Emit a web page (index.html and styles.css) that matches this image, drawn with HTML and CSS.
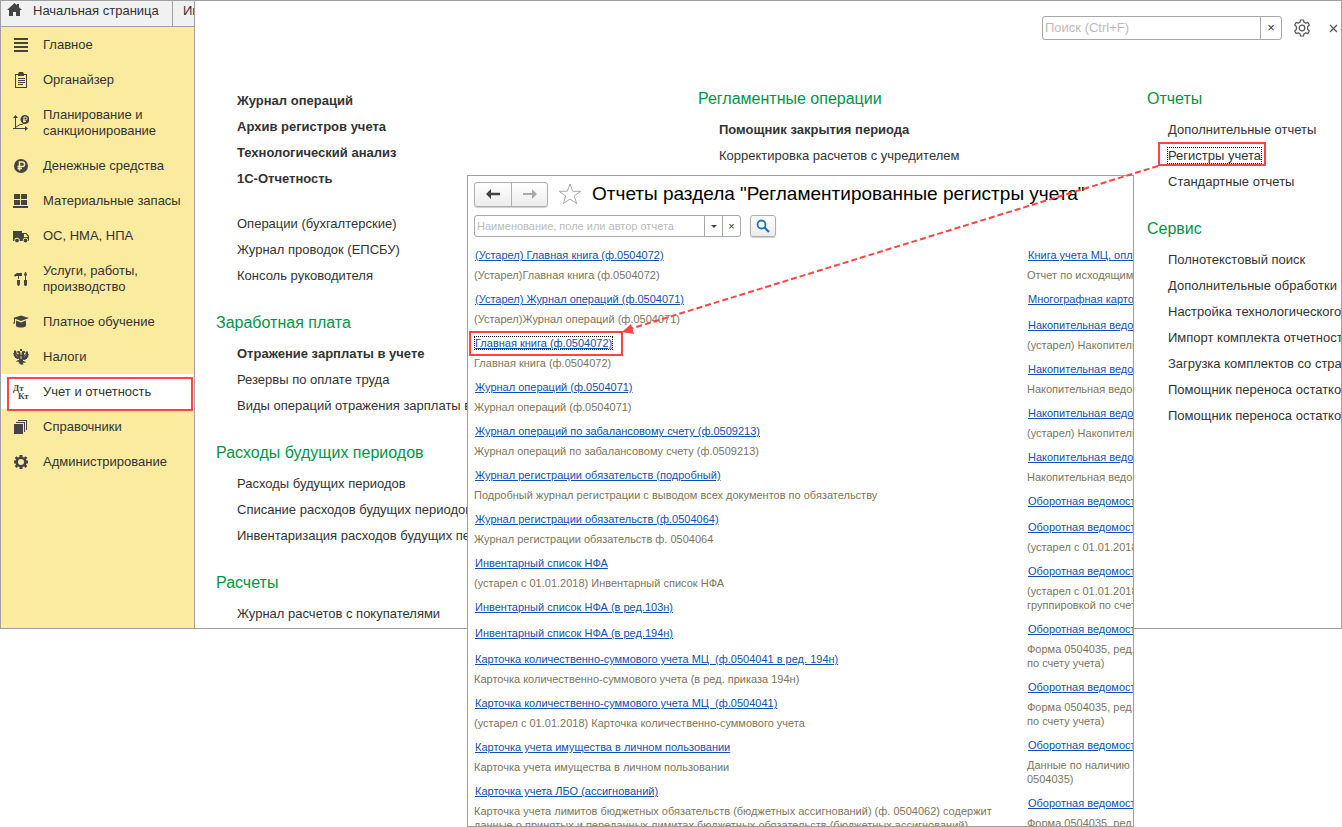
FILE: index.html
```html
<!DOCTYPE html>
<html lang="ru">
<head>
<meta charset="utf-8">
<title>Учет и отчетность</title>
<link rel="stylesheet" href="styles.css">
</head>
<body>
<div class="desktop">
  <div class="app">
    <aside class="sidebar">
      <div class="tabs">
        <a class="tab tab-home" href="#">
          <svg width="15" height="14" viewBox="0 0 15 14"><path d="M7.500 0 0 7h2v6h4V9h3v4h4V7h2L12 4.200V1h-2v1.300z" fill="#444"/></svg>
          <span>Начальная страница</span>
        </a>
        <a class="tab" href="#">Информация</a>
      </div>
      <nav class="sections">
        <a class="section" href="#">
          <svg class="ico" viewBox="0 0 16 16"><path d="M1 1h14v2H1zM1 5h14v2H1zM1 9h14v2H1zM1 13h14v2H1z"/></svg>
          <span>Главное</span>
        </a>
        <a class="section" href="#">
          <svg class="ico" viewBox="0 0 16 16"><path fill-rule="evenodd" d="M2 2h3l1-2h4l1 2h3v14H2zM3 3v12h10V3h-2v1H5V3z"/><path d="M5 6h7v1H5zM5 8h7v1H5zM5 10h7v1H5zM5 12h5v1H5z"/></svg>
          <span>Органайзер</span>
        </a>
        <a class="section" href="#">
          <svg class="ico" viewBox="0 0 16 16"><path d="M2 2h1v11h9v-2l3 2.500-3 2.500v-2H0v-1h2zM2.500 0 5 3H0z"/><path d="M3 12 7 9.500h2l3-2" fill="none" stroke="#444"/><circle cx="12" cy="4.500" r="4.500"/><path d="M11 7.500V2h1.500a1.500 1.500 0 0 1 0 3H10M10 6.500h3" class="cut"/></svg>
          <span>Планирование и<br>санкционирование</span>
        </a>
        <a class="section" href="#">
          <svg class="ico" viewBox="0 0 16 16"><circle cx="8" cy="8" r="7"/><path d="M6.500 12.500V4h2.800a2.200 2.200 0 0 1 0 4.500H4.500M4.500 10.500H9" class="cut wide"/></svg>
          <span>Денежные средства</span>
        </a>
        <a class="section" href="#">
          <svg class="ico" viewBox="0 0 16 16"><path d="M1 1h6v5H1zM8 1h6v5H8zM1 7h6v5H1zM8 7h6v5H8zM0 13h15v2H0z"/></svg>
          <span>Материальные запасы</span>
        </a>
        <a class="section" href="#">
          <svg class="ico" viewBox="0 0 16 16"><path fill-rule="evenodd" d="M0 3h9v10H0zM9 5h4.500L16 8v5H9zM11 6v3h4l-2-3z"/><circle cx="4" cy="12.500" r="2.400" stroke="#fbeb9e"/><circle cx="12.500" cy="12.500" r="2.400" stroke="#fbeb9e"/></svg>
          <span>ОС, НМА, НПА</span>
        </a>
        <a class="section" href="#">
          <svg class="ico" viewBox="0 0 16 16"><path d="M1 4 4 2h5v3H6v3H5V5H3L2 6zM4 9h3v4l-1 2H5l-1-2zM12 1h1l1 3-1 1v4h1v5l-1 1h-1l-1-1V9h1V5l-1-1z"/></svg>
          <span>Услуги, работы,<br>производство</span>
        </a>
        <a class="section" href="#">
          <svg class="ico" viewBox="0 0 16 16"><path d="M8 1.500 16 4 8 7 2 4.800V9L1 10 0 9l1-1V4.500L0 4zM3 6.500l5 2 5-2V12c-2 2-8 2-10 0z"/></svg>
          <span>Платное обучение</span>
        </a>
        <a class="section" href="#">
          <svg class="ico" viewBox="0 0 16 16"><path d="M7 0h2v2H7zM4.500 2h2L7.500 4v2h1V4l1-2h2l1 1.500-1.500.500v2H11l1.500-1 .500-3 1 1 1-1v3l1 .500-1 1.500.500 1-1.500 1v1h-1.500v1H11l-1-.500v1.500l2 .500 1 1.500-2-.500-1 .500.500 1.500H9L8 16l-1-1.500H5.500L6 13l-1-.500-2 .500 1-1.500 2-.500V9.500L5 10H3.500V9H2V8L.500 7 1 6 0 4.500 1 4V1l1 1 1-1 .500 3L5 5.500h.500V4L4 3.500z"/><path d="M7.500 7.500h1v2h-1zM3 5.500l1.500 2M13 5.500l-1.500 2" class="cut thin"/></svg>
          <span>Налоги</span>
        </a>
        <a class="section section-active" href="#" aria-current="page">
          <svg class="ico dtkt" viewBox="0 0 16 16"><text x="0" y="7">Дт</text><text x="5" y="15">Кт</text></svg>
          <span>Учет и отчетность</span>
        </a>
        <a class="section" href="#">
          <svg class="ico" viewBox="0 0 16 16"><path d="M1 5h9v10H1zM3 3h9v10h-1V4H3zM5 1h9v10h-1V2H5z"/></svg>
          <span>Справочники</span>
        </a>
        <a class="section" href="#">
          <svg class="ico" viewBox="0 0 16 16"><path fill-rule="evenodd" d="M6.500 1h3v2l1.500.600L12.500 2.200l1.800 1.800L13 5.300l.500 1.200H15v3h-1.500L13 10.800l1.300 1.300-1.900 1.900L11 12.600l-1.500.500V15h-3v-1.900L5 12.600 3.600 14l-1.900-1.900L3 10.800 2.500 9.500H1v-3h1.500L3 5.300 1.700 4l1.800-1.800L5 3.600 6.500 3zM8 5a3 3 0 1 0 0 6 3 3 0 0 0 0-6z"/></svg>
          <span>Администрирование</span>
        </a>
      </nav>
    </aside>

    <main class="panel">
      <header class="panel-head">
        <div class="field search">
          <input type="text" placeholder="Поиск (Ctrl+F)" aria-label="Поиск">
          <button type="button" aria-label="Очистить">×</button>
        </div>
        <button class="plain" type="button" aria-label="Настройки">
          <svg width="18" height="18" viewBox="0 0 18 18" fill="none" stroke="#555" stroke-width="1.200" stroke-linejoin="round"><path d="M7.500 1h3l.500 2.300 1.600.900 2.200-.800 1.500 2.600L14.600 7.700v2.600l1.700 1.700-1.500 2.600-2.200-.800-1.600.900-.500 2.300h-3L7 14.700l-1.600-.900-2.200.800L1.700 12l1.700-1.700V7.700L1.700 6l1.500-2.600 2.200.800L7 3.300z"/><circle cx="9" cy="9" r="2.800"/></svg>
        </button>
        <button class="plain" type="button" aria-label="Закрыть">
          <svg width="9" height="9" viewBox="0 0 9 9"><path d="M1 1l7 7M8 1 1 8" stroke="#555" stroke-width="1.200"/></svg>
        </button>
      </header>
      <div class="columns">
        <div class="column column-first">
          <ul class="group">
            <li><a class="strong" href="#">Журнал операций</a></li>
            <li><a class="strong" href="#">Архив регистров учета</a></li>
            <li><a class="strong" href="#">Технологический анализ</a></li>
            <li><a class="strong" href="#">1С-Отчетность</a></li>
          </ul>
          <ul class="group">
            <li><a href="#">Операции (бухгалтерские)</a></li>
            <li><a href="#">Журнал проводок (ЕПСБУ)</a></li>
            <li><a href="#">Консоль руководителя</a></li>
          </ul>
          <h2>Заработная плата</h2>
          <ul class="group">
            <li><a class="strong" href="#">Отражение зарплаты в учете</a></li>
            <li><a href="#">Резервы по оплате труда</a></li>
            <li><a href="#">Виды операций отражения зарплаты в учете</a></li>
          </ul>
          <h2>Расходы будущих периодов</h2>
          <ul class="group">
            <li><a href="#">Расходы будущих периодов</a></li>
            <li><a href="#">Списание расходов будущих периодов</a></li>
            <li><a href="#">Инвентаризация расходов будущих периодов</a></li>
          </ul>
          <h2>Расчеты</h2>
          <ul class="group">
            <li><a href="#">Журнал расчетов с покупателями</a></li>
          </ul>
        </div>
        <div class="column">
          <h2>Регламентные операции</h2>
          <ul class="group">
            <li><a class="strong" href="#">Помощник закрытия периода</a></li>
            <li><a href="#">Корректировка расчетов с учредителем</a></li>
          </ul>
        </div>
        <div class="column">
          <h2>Отчеты</h2>
          <ul class="group">
            <li><a href="#">Дополнительные отчеты</a></li>
            <li><a class="focused marked" href="#">Регистры учета</a></li>
            <li><a href="#">Стандартные отчеты</a></li>
          </ul>
          <h2>Сервис</h2>
          <ul class="group">
            <li><a href="#">Полнотекстовый поиск</a></li>
            <li><a href="#">Дополнительные обработки</a></li>
            <li><a href="#">Настройка технологического анализа</a></li>
            <li><a href="#">Импорт комплекта отчетности</a></li>
            <li><a href="#">Загрузка комплектов со страницы</a></li>
            <li><a href="#">Помощник переноса остатков</a></li>
            <li><a href="#">Помощник переноса остатков</a></li>
          </ul>
        </div>
      </div>
    </main>
  </div>

  <section class="window">
    <header class="window-head">
      <div class="history">
        <button type="button" aria-label="Назад"><svg width="14" height="10" viewBox="0 0 14 10"><path d="M5 0v3.800h9v2.400H5V10L0 5z" fill="#444"/></svg></button>
        <button type="button" aria-label="Вперед"><svg width="14" height="10" viewBox="0 0 14 10"><path d="M9 0v4H0v2h9v4l5-5z" fill="#aaa"/></svg></button>
      </div>
      <svg width="24" height="22" viewBox="0 0 24 22"><path d="M12 1l2.700 7.300h8L16.300 13l2.400 7.700L12 16l-6.700 4.700L7.700 13 1.300 8.300h8z" fill="none" stroke="#aaa"/></svg>
      <h1>Отчеты раздела "Регламентированные регистры учета"</h1>
    </header>
    <div class="window-search">
      <div class="field filter">
        <input type="text" placeholder="Наименование, поле или автор отчета" aria-label="Поиск отчета">
        <button type="button" aria-label="Выбрать"><svg width="6" height="3" viewBox="0 0 6 3"><path d="M0 0h6L3 3z" fill="#444"/></svg></button>
        <button type="button" aria-label="Очистить">×</button>
      </div>
      <button class="find" type="button" aria-label="Найти"><svg width="14" height="14" viewBox="0 0 14 14" fill="none" stroke="#2673ad"><circle cx="5.500" cy="5.500" r="4" stroke-width="1.800"/><path d="M8.500 8.500 13 13" stroke-width="2.400"/></svg></button>
    </div>
    <div class="reports">
      <div class="report-list">
        <a href="#">(Устарел) Главная книга (ф.0504072)</a>
        <p>(Устарел)Главная книга (ф.0504072)</p>
        <a href="#">(Устарел) Журнал операций (ф.0504071)</a>
        <p>(Устарел)Журнал операций (ф.0504071)</p>
        <a class="marked" href="#"><span class="focused">Главная книга (ф.0504072)</span></a>
        <p>Главная книга (ф.0504072)</p>
        <a href="#">Журнал операций (ф.0504071)</a>
        <p>Журнал операций (ф.0504071)</p>
        <a href="#">Журнал операций по забалансовому счету (ф.0509213)</a>
        <p>Журнал операций по забалансовому счету (ф.0509213)</p>
        <a href="#">Журнал регистрации обязательств (подробный)</a>
        <p>Подробный журнал регистрации с выводом всех документов по обязательству</p>
        <a href="#">Журнал регистрации обязательств (ф.0504064)</a>
        <p>Журнал регистрации обязательств ф. 0504064</p>
        <a href="#">Инвентарный список НФА</a>
        <p>(устарел с 01.01.2018) Инвентарный список НФА</p>
        <a href="#">Инвентарный список НФА (в ред.103н)</a>
        <a href="#">Инвентарный список НФА (в ред.194н)</a>
        <a href="#">Карточка количественно-суммового учета МЦ&nbsp; (ф.0504041 в ред. 194н)</a>
        <p>Карточка количественно-суммового учета (в ред. приказа 194н)</p>
        <a href="#">Карточка количественно-суммового учета МЦ&nbsp; (ф.0504041)</a>
        <p>(устарел с 01.01.2018) Карточка количественно-суммового учета</p>
        <a href="#">Карточка учета имущества в личном пользовании</a>
        <p>Карточка учета имущества в личном пользовании</p>
        <a href="#">Карточка учета ЛБО (ассигнований)</a>
        <p>Карточка учета лимитов бюджетных обязательств (бюджетных ассигнований) (ф. 0504062) содержит<br>данные о принятых и переданных лимитах бюджетных обязательств (бюджетных ассигнований)</p>
      </div>
      <div class="report-list report-list-cut">
        <a href="#">Книга учета МЦ, оплаченных</a>
        <p>Отчет по исходящим остаткам</p>
        <a href="#">Многографная карточка</a>
        <a href="#">Накопительная ведомость</a>
        <p>(устарел) Накопительная</p>
        <a href="#">Накопительная ведомость</a>
        <p>Накопительная ведомость</p>
        <a href="#">Накопительная ведомость</a>
        <p>(устарел) Накопительная</p>
        <a href="#">Накопительная ведомость</a>
        <p>Накопительная ведомость</p>
        <a href="#">Оборотная ведомость</a>
        <a href="#">Оборотная ведомость</a>
        <p>(устарел с 01.01.2018)</p>
        <a href="#">Оборотная ведомость</a>
        <p>(устарел с 01.01.2018)<br>группировкой по счету</p>
        <a href="#">Оборотная ведомость</a>
        <p>Форма 0504035, ред. 194н<br>по счету учета)</p>
        <a href="#">Оборотная ведомость</a>
        <p>Форма 0504035, ред. 194н<br>по счету учета)</p>
        <a href="#">Оборотная ведомость</a>
        <p>Данные по наличию (форма<br>0504035)</p>
        <a href="#">Оборотная ведомость</a>
        <p>Форма 0504035, ред. 194н</p>
      </div>
    </div>
  </section>

  <svg class="arrow" width="540" height="174" viewBox="0 0 540 174"><path d="M536 3 8 166" stroke="#f44" stroke-width="2" stroke-dasharray="6 3"/><path d="M0 169 9 161 12 171z" fill="#f44"/></svg>
</div>
</body>
</html>
```
FILE: styles.css
```css
* {
  box-sizing: border-box;
}

body {
  margin: 0;
  background: #fff;
  color: #333;
  font: 13px/16px "Liberation Sans", Arial, sans-serif;
}

a {
  color: inherit;
  text-decoration: none;
}

h1,
h2,
p,
ul {
  margin: 0;
  padding: 0;
  font-weight: normal;
}

button,
input {
  margin: 0;
  padding: 0;
  border: 0;
  background: none;
  color: #333;
  font: inherit;
}

button {
  display: flex;
  align-items: center;
  justify-content: center;
}

.desktop {
  position: relative;
  min-height: 100vh;
  overflow: hidden;
}

.app {
  display: flex;
  border: 1px solid #a0a0a0;
}

/* Sidebar */

.sidebar {
  flex: none;
  width: 194px;
  border-right: 1px solid #a0a0a0;
  background: #fbeb9e;
}

.tabs {
  display: flex;
  height: 26px;
  overflow: hidden;
  border-bottom: 1px solid #a0a0a0;
  background: #f1f1f1;
}

.tab {
  display: flex;
  flex: none;
  gap: 11px;
  padding: 2px 10px;
}

.tab-home {
  width: 172px;
  padding-left: 6px;
  border-right: 1px solid #a0a0a0;
}

.section {
  display: flex;
  align-items: center;
  gap: 14px;
  padding: 10px 8px 9px 12px;
  white-space: nowrap;
}

.ico {
  flex: none;
  width: 16px;
  height: 16px;
  fill: #444;
}

.cut {
  fill: none;
  stroke: #fbeb9e;
}

.wide {
  stroke-width: 1.5px;
}

.thin {
  stroke-width: 0.5px;
}

.dtkt {
  overflow: visible;
  font: bold 9px "Liberation Serif", serif;
}

.section-active {
  position: relative;
  background: #fff;
}

.section-active::after {
  content: "";
  position: absolute;
  inset: 3px 1px -2px 6px;
  border: 2px solid #f44;
}

/* Section panel */

.panel {
  flex: 1;
  min-width: 0;
  overflow: hidden;
}

.panel-head {
  display: flex;
  justify-content: flex-end;
  align-items: center;
  padding: 15px 3px 0 0;
}

.plain {
  margin-left: 11px;
}

.plain + .plain {
  margin-left: 18px;
}

.field {
  display: flex;
  height: 24px;
  border: 1px solid #a8a8a8;
  border-radius: 3px;
  background: #fff;
}

.field input {
  flex: 1;
  min-width: 0;
  padding: 0 2px;
  outline: 0;
}

.field input::placeholder {
  color: #bbb;
  opacity: 1;
}

.field button {
  border-left: 1px solid #a8a8a8;
}

.search {
  width: 240px;
}

.search button {
  width: 21px;
}

.columns {
  display: grid;
  grid-template-columns: 482px 449px 1fr;
  padding: 46px 0 1px 21px;
}

.column {
  min-width: 0;
  white-space: nowrap;
}

.column-first {
  padding-top: 2px;
}

.column h2 {
  margin-bottom: 5px;
  color: #009646;
  font-size: 16px;
  line-height: 26px;
}

.group {
  padding-left: 21px;
  line-height: 26px;
  list-style: none;
}

.group + .group {
  margin-top: 19px;
}

.group + h2 {
  margin-top: 21px;
}

.strong {
  font-weight: bold;
}

.focused {
  outline: 1px dotted #000;
}

.marked {
  position: relative;
}

.marked::after {
  content: "";
  position: absolute;
  inset: -6px -5px -3px -10px;
  border: 2px solid #f44;
}

/* Reports window */

.window {
  position: absolute;
  inset: 175px 208px 0 467px;
  overflow: hidden;
  border: 1px solid #a0a0a0;
  background: #fff;
}

.window-head {
  display: flex;
  align-items: center;
  gap: 10px;
  padding: 5px 6px 0;
  white-space: nowrap;
}

.window-head h1 {
  color: #000;
  font-size: 19px;
  line-height: 26px;
}

.history {
  display: flex;
  border: 1px solid #b0b0b0;
  border-radius: 3px;
  background: linear-gradient(#fff, #ececec);
  box-shadow: 0 1px 1px #ccc;
}

.history button {
  width: 36px;
  height: 23px;
}

.history button + button {
  border-left: 1px solid #b0b0b0;
}

.window-search {
  display: flex;
  align-items: center;
  gap: 9px;
  padding: 8px 6px 0;
}

.filter {
  width: 267px;
  height: 22px;
  font-size: 11px;
}

.filter button {
  width: 18px;
}

.find {
  width: 26px;
  height: 22px;
  border: 1px solid #b0b0b0;
  border-radius: 3px;
  background: linear-gradient(#fff, #ececec);
  box-shadow: 0 1px 1px #ccc;
}

.reports {
  display: grid;
  grid-template-columns: 553px 1fr;
  padding: 5px 0 0 6px;
  font-size: 11px;
  white-space: nowrap;
}

.report-list > a {
  display: block;
  width: fit-content;
  padding-left: 1px;
  color: #1450b4;
  line-height: 26px;
  text-decoration: underline;
}

.report-list p {
  padding-bottom: 4px;
  color: #7d765a;
  line-height: 14px;
}

.report-list .marked::after {
  inset: 1px -11px 0 -5px;
}

.report-list-cut {
  min-width: 0;
}

/* Callout arrow between the two marked links */

.arrow {
  position: absolute;
  top: 163px;
  left: 622px;
}
```
